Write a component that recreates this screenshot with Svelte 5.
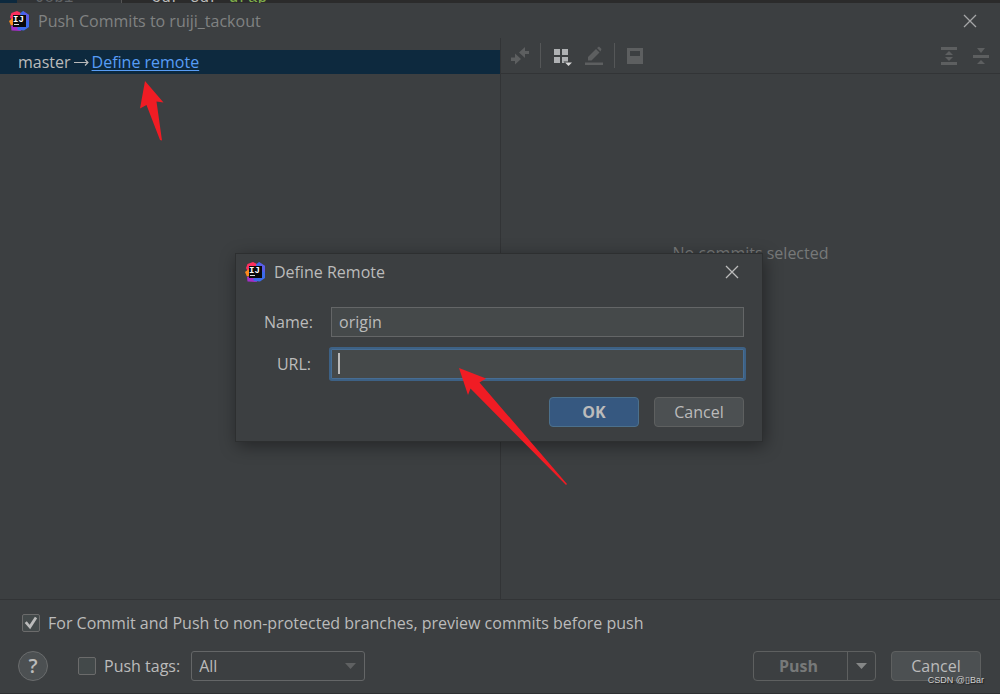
<script>
  let remoteName = $state('origin');
  let remoteUrl = $state('');
  let preview = $state(true);
  let pushTags = $state(false);
  let tagScope = $state('All');
</script>

{#snippet logo()}
  <svg class="logo" width="20" height="20" viewBox="0 0 20 20" aria-hidden="true">
    <path d="M2.500 2 8 0l4 2v10H2V8L1 6z" fill="#fc2f5f" />
    <path d="M0 10l4-3v7l-2 .5z" fill="#fb8a1c" />
    <path d="M2 15l8-2 2 7-9.500-.5z" fill="#a42fc6" />
    <path d="M11 2.500 14 0l6 4v12l-5 3.500-6-.5-1-2 6-4z" fill="#3b6bea" />
    <path d="M14 0l6 4v7l-4-3z" fill="#5a5ce6" />
    <rect x="4" y="4" width="13" height="12" fill="#090909" />
    <text x="4" y="11" class="mark">IJ</text>
    <rect x="5" y="13" width="5" height="1" fill="#ddd" />
  </svg>
{/snippet}

{#snippet cross()}
  <svg width="14" height="14" viewBox="0 0 14 14" aria-hidden="true">
    <path d="M1 1 13 13M13 1 1 13" stroke="currentColor" stroke-width="1.3" fill="none" />
  </svg>
{/snippet}

<div class="screen">
  <div class="editor" aria-hidden="true">
    <span class="gutter"></span>
    <span class="code dim">Job1</span>
    <span class="code text">-cur sur</span>
    <span class="code green">drap</span>
  </div>
  <main class="window">
    <header class="titlebar">
      {@render logo()}
      <h1>Push Commits to ruiji_tackout</h1>
      <button class="close" aria-label="Close">{@render cross()}</button>
    </header>

    <div class="panes">
      <section class="branches">
        <div class="branch">
          <span>master</span>
          <svg width="15" height="9" viewBox="0 0 15 9" aria-hidden="true">
            <path d="M0 4.500H14M11 1.500l3 3-3 3" fill="none" stroke="currentColor" stroke-width="1.100" />
          </svg>
          <a href="#remote">Define remote</a>
        </div>
      </section>
      <section class="commits">
        <div class="toolbar">
          <button class="tool" aria-label="Compare" disabled>
            <svg width="20" height="20" viewBox="0 0 20 20" fill="currentColor">
              <path d="M20 5h-4V1L10 6.500l6 5.500V8h4zM2 11.500h4V7.500l6 5.500-6 5.500V15H2z" />
            </svg>
          </button>
          <span class="divider"></span>
          <button class="tool active" aria-label="Group by">
            <svg width="20" height="20" viewBox="0 0 20 20" fill="currentColor">
              <path d="M2 3h6v6H2zM10 3h6v6h-6zM2 11h6v6H2zM10 11h6v6h-6z" />
              <path d="M11.500 15.500h9l-4.500 5z" fill="#3c3f41" />
              <path d="M13 16.500h7l-3.500 3.500z" fill="#d8d8d8" />
            </svg>
          </button>
          <button class="tool" aria-label="Edit" disabled>
            <svg width="20" height="20" viewBox="0 0 20 20" fill="currentColor">
              <path d="M5 11 13 3l3.500 3.500-8 8H5zM14 2l2-1.500L18.500 3 17.500 5.500zM2 16.500h18V19H2z" />
            </svg>
          </button>
          <span class="divider"></span>
          <button class="tool" aria-label="Preview" disabled>
            <svg width="20" height="20" viewBox="0 0 20 20" fill="currentColor">
              <path fill-rule="evenodd" d="M1 2h16v16H1zM4 5v5h10V5z" />
            </svg>
          </button>
          <span class="spacer"></span>
          <button class="tool" aria-label="Expand all" disabled>
            <svg width="20" height="20" viewBox="0 0 20 20" fill="currentColor">
              <path d="M1 1h16v3H1zM1 16h16v3H1zM5 9h8L9 5zM5 11h8l-4 4z" />
            </svg>
          </button>
          <button class="tool" aria-label="Collapse all" disabled>
            <svg width="20" height="20" viewBox="0 0 20 20" fill="currentColor">
              <path d="M2 9h16v3H2zM6 2h8l-4 5zM6 18h8l-4-4z" />
            </svg>
          </button>
        </div>
        <p class="empty">No commits selected</p>
      </section>
    </div>

    <footer>
      <label class="check">
        <input type="checkbox" bind:checked={preview} />
        For Commit and Push to non-protected branches, preview commits before push
      </label>
      <div class="actions">
        <button class="help" aria-label="Help">?</button>
        <label class="check">
          <input type="checkbox" bind:checked={pushTags} />
          Push tags:
        </label>
        <div class="combo">
          <select aria-label="Tags to push" bind:value={tagScope}>
            <option>All</option>
            <option>Current Branch</option>
          </select>
          <svg class="chevron" width="11" height="6" viewBox="0 0 11 6" aria-hidden="true">
            <path d="M0 0h11L5.500 6z" fill="#5f6162" />
          </svg>
        </div>
        <span class="spacer"></span>
        <div class="split">
          <button class="push" disabled>Push</button>
          <button class="more" aria-label="More push options" disabled>
            <svg width="11" height="6" viewBox="0 0 11 6"><path d="M0 0h11L5.500 6z" fill="#858787" /></svg>
          </button>
        </div>
        <button class="button">Cancel</button>
      </div>
    </footer>
  </main>

  <div class="dialog" role="dialog" aria-labelledby="remote-title">
    <header class="dialog-title">
      {@render logo()}
      <h2 id="remote-title">Define Remote</h2>
      <button class="close" aria-label="Close dialog">{@render cross()}</button>
    </header>
    <form onsubmit={(e) => e.preventDefault()}>
      <label for="remote-name">Name:</label>
      <input id="remote-name" type="text" bind:value={remoteName} />
      <label for="remote-url">URL:</label>
      <div class="field">
        <input id="remote-url" class="focused" type="text" bind:value={remoteUrl} />
        <span class="caret"></span>
      </div>
      <div class="buttons">
        <button class="button primary" type="submit">OK</button>
        <button class="button" type="button">Cancel</button>
      </div>
    </form>
  </div>

  <svg class="arrow link-arrow" width="26" height="62" viewBox="0 0 26 62" aria-hidden="true">
    <path d="M6 0 24.500 21.500 17.500 20.500 23 59.500 21 59 7.500 24 1 27.500z" fill="#f01c24" />
  </svg>
  <svg class="arrow url-arrow" width="110" height="118" viewBox="0 0 110 118" aria-hidden="true">
    <path d="M0 0 27 10.500 20.500 14.500 108 116 107 117 11.500 20.500 9 27z" fill="#f01c24" />
  </svg>
  <span class="credit">CSDN @▯Bar</span>
</div>

<style>
  :global(body) { margin: 0; background: #3c3f41; }
  .screen {
    position: relative;
    display: flex;
    flex-direction: column;
    min-height: 100vh;
    overflow: hidden;
    box-sizing: border-box;
    border-bottom: 1px solid #2e3032;
    font: 16px/24px "Open Sans", "Noto Sans", sans-serif;
    color: #bbbbbb;
    background: #3c3f41;
  }
  .screen :is(button, input, select) { font: inherit; color: inherit; box-sizing: border-box; }
  svg { display: block; flex: none; }
  h1, h2, p { margin: 0; font: inherit; }
  .editor { display: flex; height: 3px; overflow: hidden; background: #2b2b2b; }
  .gutter { width: 17px; background: #0d293e; }
  .code { font-family: "Liberation Mono", monospace; line-height: 24px; margin-top: -14px; white-space: pre; }
  .dim { width: 86px; padding-left: 18px; background: #313335; color: #606366; border-right: 1px solid #555; }
  .text { padding-left: 20px; }
  .green { padding-left: 10px; color: #7fae4a; }
  .window { flex: 1; display: flex; flex-direction: column; }
  .titlebar { display: flex; align-items: center; height: 35px; padding: 0 23px 0 9px; gap: 9px; color: #808282; }
  .close { display: flex; margin-left: auto; padding: 0; border: 0; background: none; }
  .titlebar .close { color: #a5a6a7; }
  .mark { font: bold 9px "Liberation Mono", monospace; fill: #fff; }
  .panes { flex: 1; display: grid; grid-template-columns: 1fr 1fr; border-bottom: 1px solid #323436; }
  .branches { padding-top: 12px; }
  .branch { display: flex; align-items: center; gap: 3px; height: 24px; padding-left: 18px; background: #0d293e; }
  a { color: #589df6; text-underline-offset: 2px; }
  .commits { display: flex; flex-direction: column; border-left: 1px solid #323436; }
  .toolbar { display: flex; align-items: center; gap: 11px; height: 35px; padding: 0 9px 0 8px; border-bottom: 1px solid #323436; }
  .tool { display: flex; padding: 0; border: 0; background: none; }
  .tool:disabled { color: #5d5f60; }
  .tool.active { color: #afb1b3; }
  .divider { width: 1px; height: 25px; background: #555758; }
  .spacer { flex: 1; }
  .empty { margin-top: 167px; text-align: center; color: #777979; }
  footer { padding: 11px 19px 12px 18px; }
  .check { display: flex; align-items: center; gap: 8px; }
  footer > .check { padding-left: 4px; }
  .check input {
    appearance: none;
    display: grid;
    place-items: center;
    width: 18px;
    height: 18px;
    margin: 0;
    border: 1px solid #6b6b6b;
    border-radius: 2px;
    background: #43494a;
  }
  .check input:checked::after {
    content: "";
    width: 14px;
    height: 14px;
    background: #bbbbbb;
    clip-path: polygon(5% 50%, 20% 38%, 40% 62%, 78% 6%, 94% 16%, 44% 94%);
  }
  .actions { display: flex; align-items: center; margin-top: 16px; }
  .help { width: 30px; height: 30px; padding: 0; border: 1px solid #6a6c6d; border-radius: 50%; background: #4c5052; }
  .screen .help { font-size: 20px; font-weight: 600; line-height: 26px; }
  .actions .check { margin-left: 30px; }
  .combo { position: relative; margin-left: 11px; }
  select { appearance: none; display: block; width: 174px; height: 30px; padding: 0 7px; border: 1px solid #646667; border-radius: 3px; background: #3c3f41; }
  .chevron { position: absolute; right: 9px; top: 12px; pointer-events: none; }
  .split { display: flex; height: 30px; margin-right: 15px; box-sizing: border-box; border: 1px solid #5e6060; border-radius: 4px; }
  .split button { border: 0; padding: 0; background: none; }
  .split .push { width: 93px; padding-right: 4px; font-weight: 700; color: #777979; }
  .split .more { display: grid; place-items: center; width: 28px; border-left: 1px solid #5e6060; }
  .button { width: 90px; height: 30px; padding: 0; border: 1px solid #5e6060; border-radius: 4px; background: #4c5052; }
  .dialog {
    position: absolute;
    left: calc(50% - 265px);
    top: 253px;
    width: 528px;
    box-sizing: border-box;
    border: 1px solid #2d2f30;
    background: #3c3f41;
    box-shadow: 2px 4px 16px rgba(0, 0, 0, 0.4);
  }
  .dialog-title { display: flex; align-items: center; gap: 9px; height: 36px; padding: 0 23px 0 9px; }
  form { display: grid; grid-template-columns: 47px 1fr; column-gap: 20px; row-gap: 12px; align-items: center; padding: 17px 18px 14px 28px; }
  form > label { text-align: right; }
  form input { display: block; width: 100%; height: 30px; padding: 0 7px; border: 1px solid #646667; border-radius: 0; background: #45494a; outline: 0; }
  .field { position: relative; }
  form .focused { border-color: #466d94; box-shadow: 0 0 0 2px #3d6185; border-radius: 1px; }
  .caret { position: absolute; left: 7px; top: 4px; width: 2px; height: 21px; background: #bbbbbb; }
  .buttons { grid-column: 1 / -1; display: flex; justify-content: flex-end; gap: 15px; margin-top: 6px; }
  .screen .primary { border-color: #4c708c; background: #365880; font-weight: 700; }
  .arrow { position: absolute; pointer-events: none; }
  .link-arrow { left: 139px; top: 81px; }
  .url-arrow { left: calc(50% - 41px); top: 368px; }
  .credit { position: absolute; right: 16px; bottom: 7px; font: 9px/12px "Liberation Sans", sans-serif; color: #d0d0d0; text-shadow: 1px 1px 1px #222; }
</style>
